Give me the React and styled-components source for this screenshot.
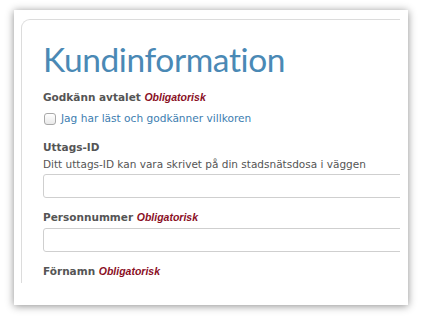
import styled, { createGlobalStyle } from "styled-components";

const GlobalStyle = createGlobalStyle`
  html, body {
    margin: 0;
    padding: 0;
    background: #fff;
  }
  body {
    font-family: "DejaVu Sans", Verdana, sans-serif;
  }
`;

const Page = styled.div`
  width: 423px;
  height: 319px;
  padding: 10px 0 0 14px;
  box-sizing: border-box;
`;

const Sheet = styled.div`
  width: 394px;
  height: 295px;
  background: #fff;
  box-shadow: 0 1px 8px rgba(0, 0, 0, 0.45);
  padding: 9px 0 0 7px;
  box-sizing: border-box;
`;

const Card = styled.section`
  width: 379px;
  height: 264px;
  box-sizing: border-box;
  border-top: 1px solid #dcdcdc;
  border-left: 1px solid #dcdcdc;
  border-top-left-radius: 9px;
  padding: 0 0 0 21px;
  overflow: hidden;
`;

const Title = styled.h1`
  margin: 19px 0 0;
  font-family: Lato, "DejaVu Sans", sans-serif;
  font-weight: 400;
  font-size: 33.5px;
  letter-spacing: -0.4px;
  line-height: 40px;
  color: #4a89b5;
`;

const Field = styled.div`
  margin-top: ${(p) => p.$gap || 0}px;
  display: flex;
  flex-direction: column;
`;

const Label = styled.div`
  font-size: 10.5px;
  line-height: 12px;
  font-weight: bold;
  color: #555;
`;

const Required = styled.em`
  font-family: "Liberation Sans", Arial, sans-serif;
  font-size: 10.5px;
  font-weight: bold;
  font-style: italic;
  color: #8a0f1f;
`;

const CheckRow = styled.label`
  margin-top: 8px;
  display: flex;
  align-items: center;
  gap: 5px;
  font-size: 10.6px;
  line-height: 12px;
  color: #3d7db0;
  padding-left: 1px;
`;

const Box = styled.input`
  appearance: none;
  margin: 2px 0 0;
  width: 12px;
  height: 12px;
  border: 1px solid #a9a9a9;
  border-radius: 3px;
  background: linear-gradient(#fff, #e9e9e9);
  box-sizing: border-box;
`;

const Help = styled.div`
  margin-top: 5px;
  font-size: 10.5px;
  line-height: 12px;
  color: #555;
`;

const TextInput = styled.input`
  margin-top: ${(p) => p.$gap}px;
  width: 400px;
  height: 24px;
  box-sizing: border-box;
  border: 1px solid #cfcfcf;
  border-radius: 3px;
  background: #fff;
  padding: 0 6px;
  font: inherit;
`;

export default function App() {
  return (
    <>
      <GlobalStyle />
      <Page>
        <Sheet>
          <Card>
            <Title>Kundinformation</Title>
            <Field $gap={12}>
              <Label>
                Godkänn avtalet <Required>Obligatorisk</Required>
              </Label>
              <CheckRow>
                <Box type="checkbox" />
                Jag har läst och godkänner villkoren
              </CheckRow>
            </Field>
            <Field $gap={16}>
              <Label>Uttags-ID</Label>
              <Help>Ditt uttags-ID kan vara skrivet på din stadsnätsdosa i väggen</Help>
              <TextInput $gap={4} />
            </Field>
            <Field $gap={13}>
              <Label>
                Personnummer <Required>Obligatorisk</Required>
              </Label>
              <TextInput $gap={5} />
            </Field>
            <Field $gap={13}>
              <Label>
                Förnamn <Required>Obligatorisk</Required>
              </Label>
            </Field>
          </Card>
        </Sheet>
      </Page>
    </>
  );
}
